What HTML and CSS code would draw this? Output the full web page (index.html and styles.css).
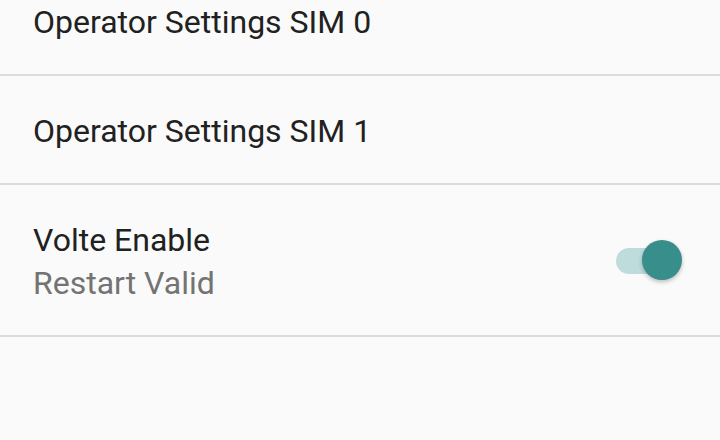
FILE: index.html
```html
<!DOCTYPE html>
<html lang="en">
<head>
  <meta charset="UTF-8">
  <title>Settings</title>
  <link rel="stylesheet" href="styles.css">
</head>
<body>
  <ul class="prefs">
    <li class="pref">
      <div class="pref-text">
        <div class="pref-title">Operator Settings SIM 0</div>
      </div>
    </li>
    <li class="pref">
      <div class="pref-text">
        <div class="pref-title">Operator Settings SIM 1</div>
      </div>
    </li>
    <li class="pref pref-tall">
      <div class="pref-text">
        <div class="pref-title">Volte Enable</div>
        <div class="pref-summary">Restart Valid</div>
      </div>
      <span class="switch on">
        <span class="switch-track"></span>
        <span class="switch-thumb"></span>
      </span>
    </li>
  </ul>
</body>
</html>
```

FILE: styles.css
```css
html, body {
  margin: 0;
  height: 100%;
  background: #fafafa;
  overflow: hidden;
}

body {
  font-family: Roboto, "Noto Sans", sans-serif;
  color: #212121;
}

.prefs {
  list-style: none;
  margin: -33px 0 0;
  padding: 0;
}

.pref {
  display: flex;
  align-items: center;
  height: 107px;
  padding: 0 38px 0 33px;
  border-bottom: 2px solid #dcdcdc;
}

.pref-tall {
  height: 150px;
}

.pref-text {
  flex: 1;
  padding-top: 4px;
}

.pref-title {
  font-size: 32px;
  line-height: 43px;
}

.pref-summary {
  font-size: 32px;
  line-height: 43px;
  color: #737373;
}

.switch {
  position: relative;
  width: 68px;
  height: 44px;
}

.switch-track {
  position: absolute;
  left: 2px;
  right: 4px;
  top: 10px;
  height: 26px;
  border-radius: 13px;
  background: #bedcdc;
}

.switch-thumb {
  position: absolute;
  right: 0;
  top: 2px;
  width: 40px;
  height: 40px;
  border-radius: 50%;
  background: #388e8b;
  box-shadow: 0 2px 4px rgba(0, 0, 0, 0.25);
}
```
